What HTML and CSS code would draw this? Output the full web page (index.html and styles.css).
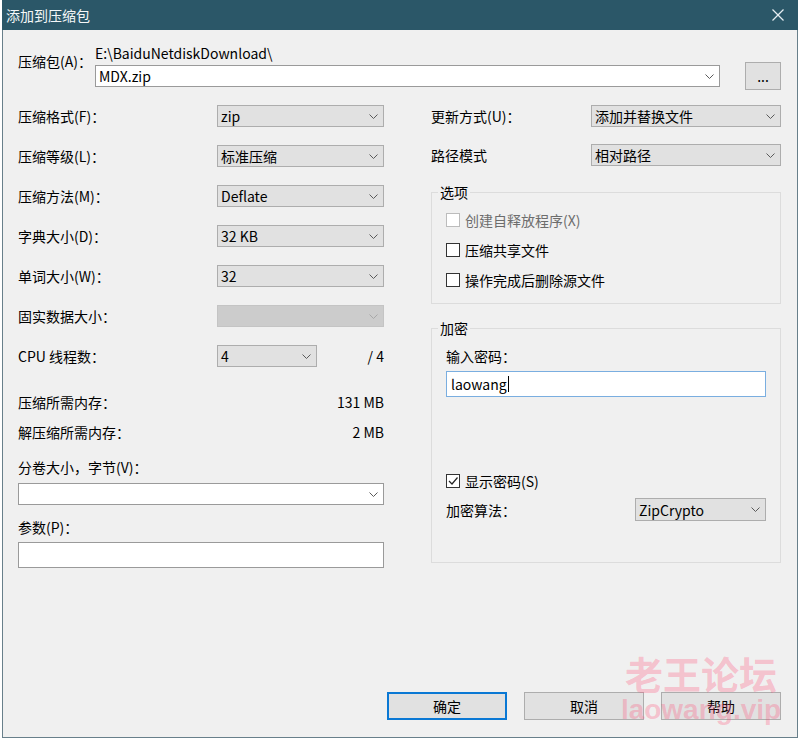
FILE: index.html
```html
<!DOCTYPE html>
<html lang="zh-CN">
<head>
<meta charset="utf-8">
<title>添加到压缩包</title>
<link rel="stylesheet" href="styles.css">
</head>
<body>
<div class="window">
  <div class="titlebar">
    <span class="title">添加到压缩包</span>
    <svg class="close" viewBox="0 0 12 12"><line x1="0.5" y1="0.5" x2="11.5" y2="11.5"/><line x1="11.5" y1="0.5" x2="0.5" y2="11.5"/></svg>
  </div>
  <div class="body">
    <div class="archive-row">
      <div class="archive-lbl">压缩包(A)：</div>
      <div class="archive-field">
        <div class="path">E:\BaiduNetdiskDownload\</div>
        <div class="combo edit"><span>MDX.zip</span><svg class="chev" viewBox="0 0 9 5"><polyline points="0.5,0.5 4.5,4.5 8.5,0.5"/></svg></div>
      </div>
      <div class="btn browse">...</div>
    </div>

    <div class="columns">
      <div class="col-left">
        <div class="form-grid">
          <div class="lbl">压缩格式(F)：</div>
          <div class="combo"><span>zip</span><svg class="chev" viewBox="0 0 9 5"><polyline points="0.5,0.5 4.5,4.5 8.5,0.5"/></svg></div>
          <div class="lbl">压缩等级(L)：</div>
          <div class="combo"><span>标准压缩</span><svg class="chev" viewBox="0 0 9 5"><polyline points="0.5,0.5 4.5,4.5 8.5,0.5"/></svg></div>
          <div class="lbl">压缩方法(M)：</div>
          <div class="combo"><span>Deflate</span><svg class="chev" viewBox="0 0 9 5"><polyline points="0.5,0.5 4.5,4.5 8.5,0.5"/></svg></div>
          <div class="lbl">字典大小(D)：</div>
          <div class="combo"><span>32 KB</span><svg class="chev" viewBox="0 0 9 5"><polyline points="0.5,0.5 4.5,4.5 8.5,0.5"/></svg></div>
          <div class="lbl">单词大小(W)：</div>
          <div class="combo"><span>32</span><svg class="chev" viewBox="0 0 9 5"><polyline points="0.5,0.5 4.5,4.5 8.5,0.5"/></svg></div>
          <div class="lbl">固实数据大小：</div>
          <div class="combo disabled"><span></span><svg class="chev" viewBox="0 0 9 5"><polyline points="0.5,0.5 4.5,4.5 8.5,0.5"/></svg></div>
          <div class="lbl">CPU 线程数：</div>
          <div class="cpu">
            <div class="combo small"><span>4</span><svg class="chev" viewBox="0 0 9 5"><polyline points="0.5,0.5 4.5,4.5 8.5,0.5"/></svg></div>
            <span class="of">/ 4</span>
          </div>
        </div>
        <div class="mem first"><span>压缩所需内存：</span><span>131 MB</span></div>
        <div class="mem"><span>解压缩所需内存：</span><span>2 MB</span></div>
        <div class="lbl split-lbl">分卷大小，字节(V)：</div>
        <div class="combo edit split"><span></span><svg class="chev" viewBox="0 0 9 5"><polyline points="0.5,0.5 4.5,4.5 8.5,0.5"/></svg></div>
        <div class="lbl param-lbl">参数(P)：</div>
        <div class="textbox param"></div>
      </div>

      <div class="col-right">
        <div class="rgrid">
          <div class="lbl">更新方式(U)：</div>
          <div class="combo"><span>添加并替换文件</span><svg class="chev" viewBox="0 0 9 5"><polyline points="0.5,0.5 4.5,4.5 8.5,0.5"/></svg></div>
          <div class="lbl">路径模式</div>
          <div class="combo"><span>相对路径</span><svg class="chev" viewBox="0 0 9 5"><polyline points="0.5,0.5 4.5,4.5 8.5,0.5"/></svg></div>
        </div>

        <fieldset class="group options">
          <legend>选项</legend>
          <div class="checks">
            <div class="check disabled"><span class="box"></span><span>创建自释放程序(X)</span></div>
            <div class="check"><span class="box"></span><span>压缩共享文件</span></div>
            <div class="check"><span class="box"></span><span>操作完成后删除源文件</span></div>
          </div>
        </fieldset>

        <fieldset class="group crypt">
          <legend>加密</legend>
          <div class="lbl">输入密码：</div>
          <div class="textbox password"><span>laowang</span><span class="caret"></span></div>
          <div class="check show-pw"><span class="box"><svg viewBox="0 0 12 12"><polyline points="2,6 5,9 10.5,2.5"/></svg></span><span>显示密码(S)</span></div>
          <div class="algo">
            <span class="lbl">加密算法：</span>
            <div class="combo algo-combo"><span>ZipCrypto</span><svg class="chev" viewBox="0 0 9 5"><polyline points="0.5,0.5 4.5,4.5 8.5,0.5"/></svg></div>
          </div>
        </fieldset>
      </div>
    </div>

    <div class="buttons">
      <div class="btn default">确定</div>
      <div class="btn">取消</div>
      <div class="btn">帮助</div>
    </div>
  </div>
  <div class="watermark">
    <div class="wm-cn">老王论坛</div>
    <div class="wm-en">laowang.vip</div>
  </div>
</div>
</body>
</html>
```

FILE: styles.css
```css
* { box-sizing: border-box; }

html, body {
  margin: 0;
  padding: 0;
}

body {
  background: #ffffff;
  font-family: "Noto Sans CJK SC", "Microsoft YaHei", sans-serif;
  font-size: 14px;
  line-height: 18px;
  color: #000;
}

.window {
  position: relative;
  margin-left: 2px;
  width: 796px;
  height: 738px;
  display: flex;
  flex-direction: column;
}

.titlebar {
  height: 30px;
  flex: none;
  background: #2b5768;
  color: #fff;
  display: flex;
  align-items: center;
  justify-content: space-between;
  padding: 0 14px 0 4px;
}

.title {
  font-size: 14px;
  color: #f4f7f8;
}

.close {
  width: 12px;
  height: 12px;
  stroke: #e6edf0;
  stroke-width: 1.2;
}

.body {
  flex: 1;
  background: #f0f0f0;
  border: 1px solid #687f8a;
  border-top: none;
  padding: 15px 16px 17px 15px;
  display: flex;
  flex-direction: column;
}

/* archive row */
.archive-row {
  display: flex;
  align-items: flex-start;
}

.archive-lbl {
  width: 77px;
  margin-top: 7px;
}

.archive-field {
  width: 625px;
}

.path {
  line-height: 16px;
  margin-bottom: 4px;
}

.browse {
  margin-left: 25px;
  margin-top: 17px;
  width: 36px;
  height: 28px;
  line-height: 20px;
}

/* generic controls */
.combo {
  height: 22px;
  border: 1px solid #adadad;
  background: #e1e1e1;
  display: flex;
  align-items: center;
  justify-content: space-between;
  padding: 0 5px 0 3px;
  white-space: nowrap;
}

.combo.edit {
  background: #fff;
  border-color: #9a9a9a;
}

.combo.disabled {
  background: #cccccc;
  border-color: #c4c4c4;
}

.combo.disabled .chev {
  stroke: #a8a8a8;
}

.chev {
  width: 9px;
  height: 5px;
  fill: none;
  stroke: #5a5a5a;
  stroke-width: 1;
  flex: none;
}

.textbox {
  background: #fff;
  border: 1px solid #9a9a9a;
}

.btn {
  background: #e1e1e1;
  border: 1px solid #adadad;
  display: flex;
  align-items: center;
  justify-content: center;
}

/* columns */
.columns {
  display: flex;
  justify-content: space-between;
  margin-top: 15px;
}

.col-left {
  width: 366px;
}

.col-right {
  width: 350px;
}

.form-grid {
  display: grid;
  grid-template-columns: 199px 167px;
  row-gap: 18px;
  align-items: center;
}

.cpu {
  display: flex;
  align-items: center;
  justify-content: space-between;
}

.combo.small {
  width: 100px;
}

.mem {
  display: flex;
  justify-content: space-between;
  margin-top: 12px;
}

.mem.first {
  margin-top: 26px;
}

.split-lbl {
  margin-top: 17px;
}

.combo.split {
  margin-top: 7px;
}

.param-lbl {
  margin-top: 13px;
}

.textbox.param {
  margin-top: 6px;
  height: 26px;
}

/* right column */
.rgrid {
  display: grid;
  grid-template-columns: 160px 190px;
  row-gap: 17px;
  align-items: center;
}

.group {
  margin: 0;
  border: 1px solid #dcdcdc;
  padding: 10px 14px 14px 14px;
  min-width: 0;
}

.group legend {
  padding: 0 2px;
  margin-left: -8px;
  line-height: 18px;
}

.options {
  margin-top: 17px;
}

.crypt {
  margin-top: 15px;
  padding-bottom: 41px;
}

.checks {
  display: flex;
  flex-direction: column;
  gap: 12px;
}

.check {
  display: flex;
  align-items: center;
  gap: 5px;
  height: 18px;
}

.box {
  width: 14px;
  height: 14px;
  border: 1px solid #333;
  background: #fff;
  flex: none;
  display: flex;
}

.box svg {
  width: 12px;
  height: 12px;
  fill: none;
  stroke: #222;
  stroke-width: 1.2;
}

.check.disabled {
  color: #6d6d6d;
}

.check.disabled .box {
  border-color: #bcbcbc;
}

.textbox.password {
  margin-top: 6px;
  height: 26px;
  border-color: #7aaee0;
  display: flex;
  align-items: center;
  padding-left: 4px;
}

.caret {
  width: 1px;
  height: 16px;
  background: #000;
  margin-left: 1px;
}

.check.show-pw {
  margin-top: 75px;
}

.algo {
  margin-top: 8px;
  display: flex;
  align-items: center;
  justify-content: space-between;
}

.algo-combo {
  width: 131px;
  height: 23px;
}

/* buttons */
.buttons {
  margin-top: auto;
  display: flex;
  justify-content: flex-end;
  gap: 17px;
}

.buttons .btn {
  width: 120px;
  height: 28px;
}

.btn.default {
  border: 2px solid #0a78d4;
}

/* watermark */
.watermark {
  position: absolute;
  left: 614px;
  top: 650px;
  width: 170px;
  text-align: center;
  pointer-events: none;
  color: rgba(255, 80, 120, 0.3);
  font-weight: bold;
}

.wm-cn {
  font-size: 38px;
  line-height: 46px;
}

.wm-en {
  font-family: "Liberation Sans", Arial, sans-serif;
  font-size: 28px;
  line-height: 28px;
}
```
